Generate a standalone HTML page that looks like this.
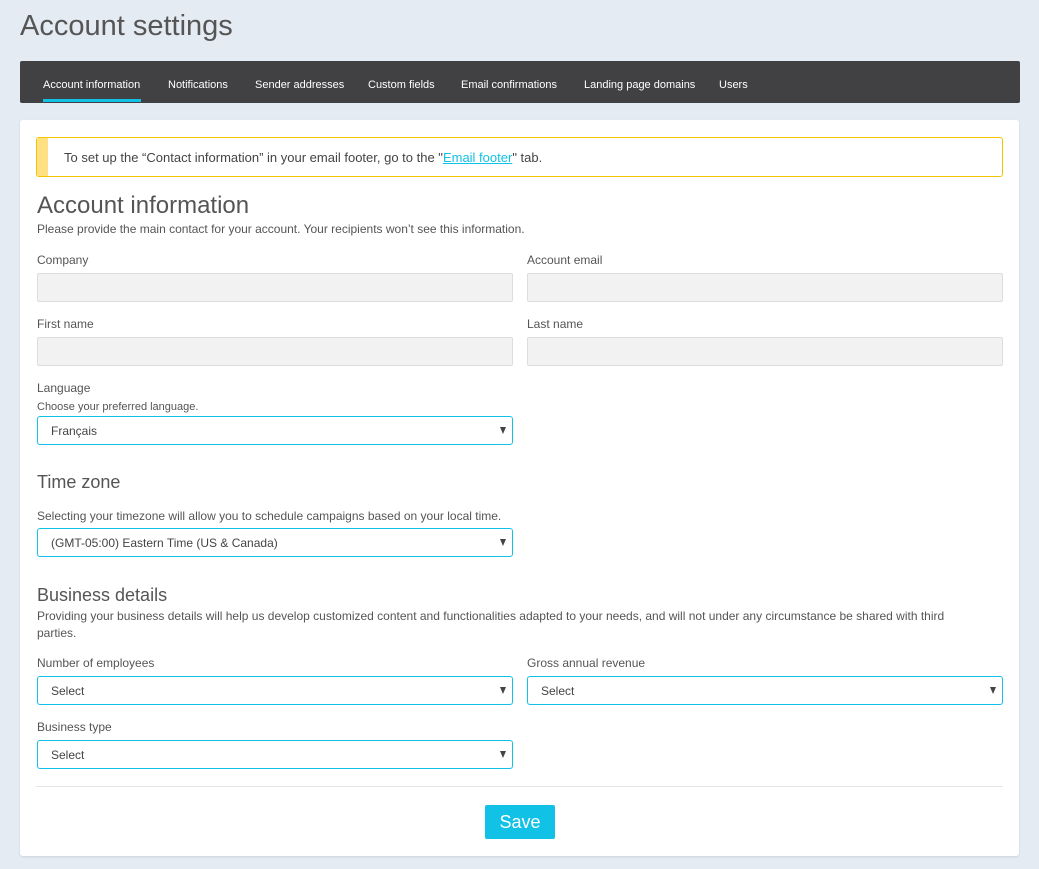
<!DOCTYPE html><html><head><style>
body{margin:0;width:1039px;height:869px;background:#e4ebf2;font-family:"Liberation Sans",sans-serif;color:#555;position:relative;overflow:hidden}
.a{position:absolute}
h1{position:absolute;left:20px;top:10px;margin:0;font-weight:300;font-size:29px;color:#555}
.nav{left:20px;top:61px;width:1000px;height:42px;background:#414042;border-radius:2px}
.nav span{position:absolute;top:18px;font-size:11px;color:#fff}
.card{left:20px;top:120px;width:999px;height:736px;background:#fff;border-radius:3px;box-shadow:0 1px 2px rgba(0,0,0,.1)}
.alert{left:36px;top:137px;width:965px;height:38px;border:1px solid #f5c400;border-radius:3px;background:#fff}
.alert i{position:absolute;left:0;top:0;width:11px;height:38px;background:#ffe082}
.alert span{position:absolute;left:27px;top:12px;font-size:13px;color:#444}
.alert a{color:#12c1e6}
.lbl{font-size:12px;color:#555}
.h2{font-size:24px;font-weight:300;color:#555}
.h3{font-size:18px;font-weight:300;color:#555}
.in{height:27px;width:474px;background:#f2f2f2;border:1px solid #ddd;border-radius:2px}
.sel{height:27px;width:474px;background:#fff;border:1px solid #12c1e6;border-radius:3px;font-size:12px;color:#444}
.sel span{position:absolute;left:13px;top:7px}
.sel b{position:absolute;right:6px;top:10px;width:0;height:0;border-left:3.5px solid transparent;border-right:3.5px solid transparent;border-top:7px solid #444}
</style></head><body>
<h1>Account settings</h1>
<div class="a nav">
<span style="left:23px">Account information</span><div class="a" style="left:23px;top:38px;width:98px;height:3px;background:#12c1e6"></div>
<span style="left:148px">Notifications</span>
<span style="left:235px">Sender addresses</span>
<span style="left:348px">Custom fields</span>
<span style="left:441px">Email confirmations</span>
<span style="left:564px">Landing page domains</span>
<span style="left:699px">Users</span>
</div>
<div class="a card"></div>
<div class="a alert"><i></i><span>To set up the “Contact information” in your email footer, go to the "<a href="#">Email footer</a>" tab.</span></div>
<div class="a h2" style="left:37px;top:192px">Account information</div>
<div class="a lbl" style="left:37px;top:222px">Please provide the main contact for your account. Your recipients won’t see this information.</div>
<div class="a lbl" style="left:37px;top:253px">Company</div>
<div class="a lbl" style="left:527px;top:253px">Account email</div>
<div class="a in" style="left:37px;top:273px"></div>
<div class="a in" style="left:527px;top:273px"></div>
<div class="a lbl" style="left:37px;top:317px">First name</div>
<div class="a lbl" style="left:527px;top:317px">Last name</div>
<div class="a in" style="left:37px;top:337px"></div>
<div class="a in" style="left:527px;top:337px"></div>
<div class="a lbl" style="left:37px;top:381px">Language</div>
<div class="a lbl" style="left:37px;top:401px;font-size:11px">Choose your preferred language.</div>
<div class="a sel" style="left:37px;top:416px"><span>Français</span><b></b></div>
<div class="a h3" style="left:37px;top:472px">Time zone</div>
<div class="a lbl" style="left:37px;top:509px">Selecting your timezone will allow you to schedule campaigns based on your local time.</div>
<div class="a sel" style="left:37px;top:528px"><span>(GMT-05:00) Eastern Time (US &amp; Canada)</span><b></b></div>
<div class="a h3" style="left:37px;top:585px">Business details</div>
<div class="a lbl" style="left:37px;top:608px;width:930px;line-height:17px">Providing your business details will help us develop customized content and functionalities adapted to your needs, and will not under any circumstance be shared with third parties.</div>
<div class="a lbl" style="left:37px;top:656px">Number of employees</div>
<div class="a lbl" style="left:527px;top:656px">Gross annual revenue</div>
<div class="a sel" style="left:37px;top:676px"><span>Select</span><b></b></div>
<div class="a sel" style="left:527px;top:676px"><span>Select</span><b></b></div>
<div class="a lbl" style="left:37px;top:720px">Business type</div>
<div class="a sel" style="left:37px;top:740px"><span>Select</span><b></b></div>
<div class="a" style="left:36px;top:786px;width:967px;height:1px;background:#e5e5e5"></div>
<div class="a" style="left:485px;top:805px;width:70px;height:34px;background:#12c1e6;border-radius:2px;color:#fff;font-size:18px;text-align:center;line-height:34px">Save</div>
</body></html>
